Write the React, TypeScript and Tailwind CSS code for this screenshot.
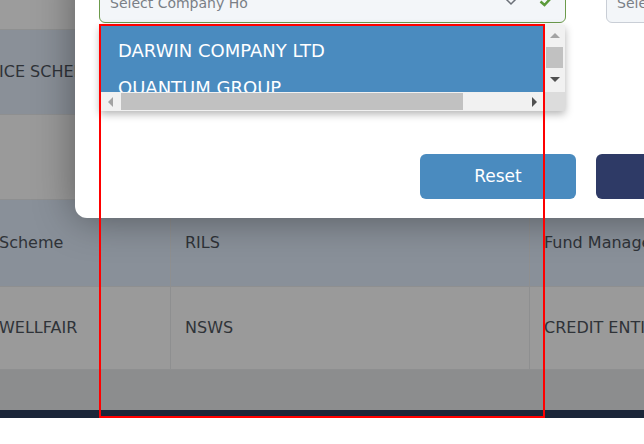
const rows = [
  { h: 'h-[85px]', bg: 'bg-[#8a9098]', cells: ['ICE SCHEME', '', ''] },
  { h: 'h-[85px]', bg: 'bg-[#9a9a9a]', cells: ['', '', ''] },
  { h: 'h-[87px]', bg: 'bg-[#899099]', cells: ['Scheme', 'RILS', 'Fund Management'] },
  { h: 'h-[83px]', bg: 'bg-[#9a9a9a]', cells: ['WELLFAIR', 'NSWS', 'CREDIT ENTITY'] },
];

function Tri({ dir, dark }: { dir: 'up' | 'down' | 'left' | 'right'; dark?: boolean }) {
  const pts = {
    up: '0,7 5,2 10,7',
    down: '0,2 10,2 5,7',
    left: '7,0 7,10 2,5',
    right: '3,0 3,10 8,5',
  }[dir];
  return (
    <svg width="10" height="10" viewBox="0 0 10 10">
      <polygon points={pts} fill={dark ? '#505050' : '#a3a3a3'} />
    </svg>
  );
}

export default function App() {
  return (
    <div
      className="relative h-[444px] w-[644px] overflow-hidden bg-white text-[#2f3338]"
      style={{ fontFamily: '"DejaVu Sans", sans-serif' }}
    >
      {/* page behind the dialog */}
      <div className="h-[30px] border-b border-[#8f9090] bg-[#9c9c9c]" />
      {rows.map((r, i) => (
        <div key={i} className={`flex ${r.h} ${r.bg} border-b border-[#8e8f90]`}>
          <div className="flex w-[171px] shrink-0 items-center overflow-hidden whitespace-nowrap border-r border-[#8e8f90] text-[16px]">
            <span className="-ml-[1px]">{r.cells[0]}</span>
          </div>
          <div className="flex w-[359px] shrink-0 items-center whitespace-nowrap border-r border-[#8e8f90] pl-[14px] text-[16px]">
            {r.cells[1]}
          </div>
          <div className="flex flex-1 items-center whitespace-nowrap pl-[14px] text-[16px]">{r.cells[2]}</div>
        </div>
      ))}
      <div className="h-[40px] bg-[#8c8d8e]" />
      <div className="h-[8px] bg-[#1b2639]" />

      {/* dialog */}
      <div className="absolute left-[75px] top-[-40px] h-[258px] w-[620px] rounded-[12px] bg-white pl-[24px] pt-[19px] shadow-[0_0_40px_rgba(0,0,0,0.4)]">
        <div className="flex items-start gap-[40px]">
          <div className="flex h-[44px] w-[467px] shrink-0 items-center rounded-[6px] border border-[#6c9b4c] bg-[#f3f6f9] pl-[10px] pr-[12px]">
            <span className="flex-1 pt-[5px] text-[14px] text-[#7a7f86]">Select Company Ho</span>
            <svg width="16" height="10" viewBox="0 0 16 10" className="mr-[20px]">
              <polyline points="1,1 8,8 15,1" fill="none" stroke="#6b7078" strokeWidth="1.5" />
            </svg>
            <svg width="14" height="11" viewBox="0 0 14 11">
              <polyline points="1.5,5.5 5.5,9 12.5,1.5" fill="none" stroke="#5b9a3a" strokeWidth="2.5" />
            </svg>
          </div>
          <div className="flex h-[44px] w-[200px] shrink-0 items-center rounded-[6px] border border-[#c9ced6] bg-[#f3f6f9] pl-[10px] pt-[5px] text-[14px] text-[#7a7f86]">
            Select
          </div>
        </div>

        <div className="mt-[131px] flex gap-[20px] pl-[321px]">
          <button className="h-[45px] w-[156px] shrink-0 rounded-[6px] bg-[#4a8bbf] text-[17px] text-white">Reset</button>
          <button className="h-[45px] w-[156px] shrink-0 rounded-[6px] bg-[#2e3a66] text-[17px] text-white">Search</button>
        </div>

        {/* open dropdown list */}
        <div className="absolute left-[25px] top-[65px] grid h-[86px] w-[465px] grid-cols-[1fr_21px] grid-rows-[67px_19px] bg-[#f1f1f1] shadow-[0_3px_8px_rgba(0,0,0,0.3)]">
          <div className="overflow-hidden whitespace-nowrap bg-[#4a8bbf] pl-[18px] pt-[7px] text-[18px] text-white">
            <div className="flex h-[37px] items-center">DARWIN COMPANY LTD</div>
            <div className="flex h-[37px] items-center">QUANTUM GROUP</div>
          </div>
          <div className="flex flex-col items-center bg-[#f1f1f1]">
            <div className="flex h-[22px] items-center"><Tri dir="up" /></div>
            <div className="h-[21px] w-[17px] bg-[#c1c1c1]" />
            <div className="flex flex-1 items-center"><Tri dir="down" dark /></div>
          </div>
          <div className="flex items-center bg-[#f1f1f1]">
            <div className="flex w-[21px] justify-center"><Tri dir="left" /></div>
            <div className="h-[17px] w-[342px] bg-[#c1c1c1]" />
            <div className="flex flex-1 justify-end pr-[5px]"><Tri dir="right" dark /></div>
          </div>
          <div className="bg-[#dcdcdc]" />
        </div>
      </div>

      {/* annotation box */}
      <div className="absolute left-[99px] top-[24px] h-[394px] w-[446px] border-2 border-[#ff0000]" />
    </div>
  );
}
